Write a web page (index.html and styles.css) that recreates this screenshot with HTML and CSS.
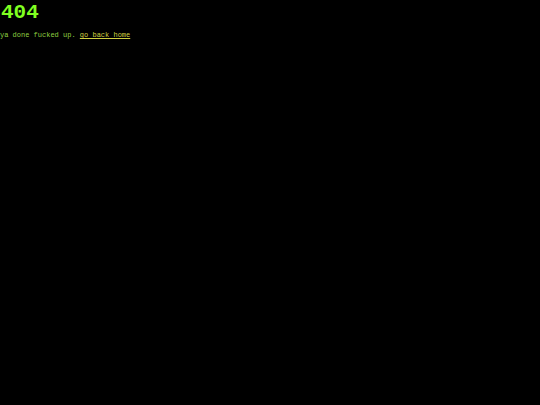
FILE: index.html
```html
<!DOCTYPE html>
<html>
<head>
<meta charset="utf-8">
<link rel="stylesheet" href="styles.css">
</head>
<body>
<h1 class="title">404</h1>
<p class="msg">ya done fucked up. <a class="home" href="#">go back home</a></p>
</body>
</html>
```
FILE: styles.css
```css
html, body {
  margin: 0;
  padding: 0;
  background: #000;
  height: 100%;
}
body {
  font-family: "Liberation Mono", "DejaVu Sans Mono", monospace;
  color: #7cfc00;
}
.title {
  font-size: 21px;
  font-weight: bold;
  margin: 0;
  padding: 3px 0 0 1px;
  line-height: 20px;
  color: #80ff20;
}
.msg {
  font-size: 7px;
  margin: 8px 0 0 0;
  line-height: 8px;
  color: #8fd040;
}
.home {
  color: #d0d040;
  text-decoration: underline;
}
```
